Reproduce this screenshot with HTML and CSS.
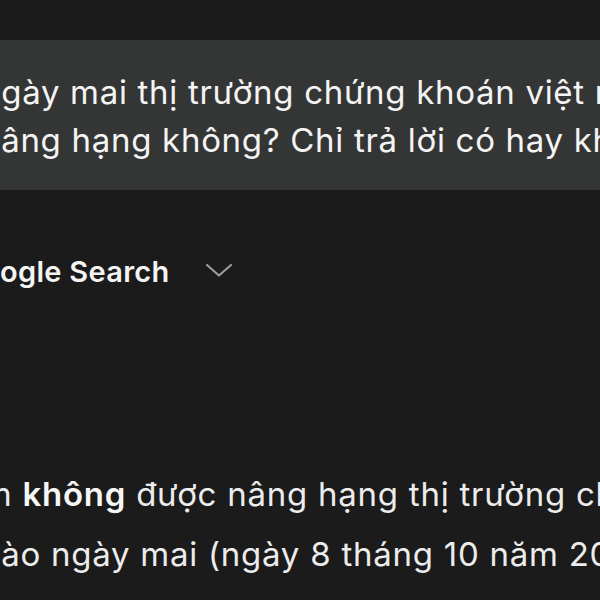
FILE: index.html
```html
<!DOCTYPE html>
<html lang="vi">
<head>
<meta charset="utf-8">
<title>Chat</title>
<link rel="stylesheet" href="styles.css">
</head>
<body>
<main class="chat">
  <section class="user-bubble">
    <p class="user-text">ngày mai thị trường chứng khoán việt nam có được<br>nâng hạng không? Chỉ trả lời có hay không</p>
  </section>
  <div class="tool-row">
    <span class="tool-name">Google Search</span>
    <svg class="chevron" width="28" height="14" viewBox="0 0 28 14" aria-hidden="true">
      <polyline points="2,2 14,12.5 26,2" fill="none" stroke="#9c9c9c" stroke-width="2.2" stroke-linecap="round" stroke-linejoin="round"/>
    </svg>
  </div>
  <p class="answer">Việt Nam <strong>không</strong> được nâng hạng thị trường chứng khoán<br>vào ngày mai (ngày 8 tháng 10 năm 2025).</p>
</main>
</body>
</html>
```

FILE: styles.css
```css
html, body {
  margin: 0;
  padding: 0;
  background: #1b1b1b;
}

body {
  width: 600px;
  height: 600px;
  overflow: hidden;
  font-family: Inter, "Noto Sans", "DejaVu Sans", sans-serif;
  color: #f2f2f2;
}

.chat {
  display: flex;
  flex-direction: column;
  padding-top: 40px;
}

.user-bubble {
  background: #343635;
  height: 150px;
  box-sizing: border-box;
  padding-top: 28px;
  overflow: hidden;
}

.user-text {
  margin: 0 0 0 -19px;
  font-size: 33px;
  letter-spacing: 0.7px;
  line-height: 48px;
  white-space: nowrap;
  color: #f4f4f4;
}

.tool-row {
  display: flex;
  align-items: center;
  gap: 35px;
  margin-top: 64px;
  margin-left: -40px;
  height: 36px;
}

.tool-name {
  font-size: 29px;
  letter-spacing: 0.3px;
  line-height: 36px;
  font-weight: 600;
  color: #f4f4f4;
  white-space: nowrap;
}

.chevron {
  display: block;
  flex: none;
  margin-top: -4px;
}

.answer {
  margin: 174px 0 0 -18px;
  font-size: 33px;
  letter-spacing: 0.75px;
  line-height: 60px;
  white-space: nowrap;
  color: #ececec;
  text-indent: -118px;
}

.answer strong {
  font-weight: 600;
  color: #f6f6f6;
}
```
